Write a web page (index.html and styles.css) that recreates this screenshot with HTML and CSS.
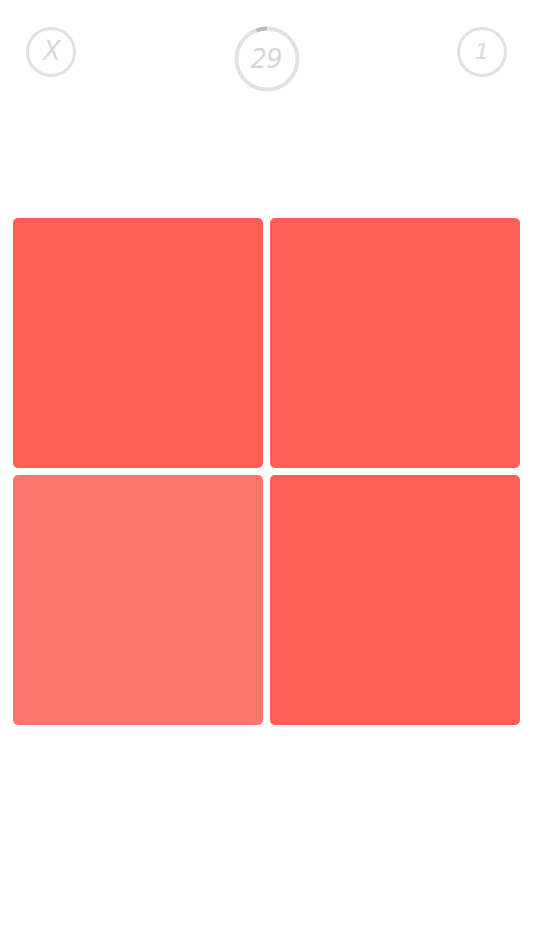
FILE: index.html
```html
<!DOCTYPE html>
<html>
<head>
<meta charset="utf-8">
<link rel="stylesheet" href="styles.css">
</head>
<body>
<div class="top">
  <div class="btn btn-close"><span>X</span></div>
  <div class="timer">
    <svg class="ring" width="66" height="66" viewBox="0 0 66 66">
      <circle cx="33" cy="33" r="30.5" fill="none" stroke="#e2e2e2" stroke-width="4"/>
      <path d="M33 2.5 A30.5 30.5 0 0 0 22.6 4.3" fill="none" stroke="#bdbdbd" stroke-width="4"/>
    </svg>
    <span class="num">29</span>
  </div>
  <div class="btn btn-score"><span>1</span></div>
</div>
<div class="grid">
  <div class="tile"></div>
  <div class="tile"></div>
  <div class="tile tile-odd"></div>
  <div class="tile"></div>
</div>
</body>
</html>
```
FILE: styles.css
```css
html, body {
  margin: 0;
  padding: 0;
  background: #ffffff;
}
body {
  width: 534px;
  height: 950px;
  font-family: "DejaVu Sans", sans-serif;
}
.top {
  display: flex;
  justify-content: space-between;
  align-items: flex-start;
  padding: 26px 27px 0 26px;
  height: 66px;
}
.btn {
  width: 44px;
  height: 44px;
  margin-top: 1px;
  border: 3px solid #e2e2e2;
  border-radius: 50%;
  display: flex;
  align-items: center;
  justify-content: center;
  color: #d9d9d9;
}
.btn-close span {
  font-size: 26px;
  font-family: "DejaVu Sans", sans-serif;
  font-style: italic;
  transform: translate(1px, -1px);
}
.btn-score span {
  font-size: 22px;
  font-family: "DejaVu Sans", sans-serif;
  font-style: italic;
  transform: translate(0, -1px);
}
.timer {
  width: 66px;
  height: 66px;
  position: relative;
  margin-left: 1px;
  display: flex;
  align-items: center;
  justify-content: center;
}
.ring {
  position: absolute;
  left: 0;
  top: 0;
}
.num {
  position: relative;
  font-family: "DejaVu Sans", sans-serif;
  font-style: italic;
  font-size: 26px;
  color: #d6d6d6;
  letter-spacing: -1px;
  transform: translate(-1px, 0);
}
.grid {
  margin-top: 126px;
  padding-left: 13px;
  display: grid;
  grid-template-columns: 250px 250px;
  grid-auto-rows: 250px;
  gap: 7px;
}
.tile {
  background: #fd5f56;
  border-radius: 5px;
}
.tile-odd {
  background: #fd766d;
}
```
